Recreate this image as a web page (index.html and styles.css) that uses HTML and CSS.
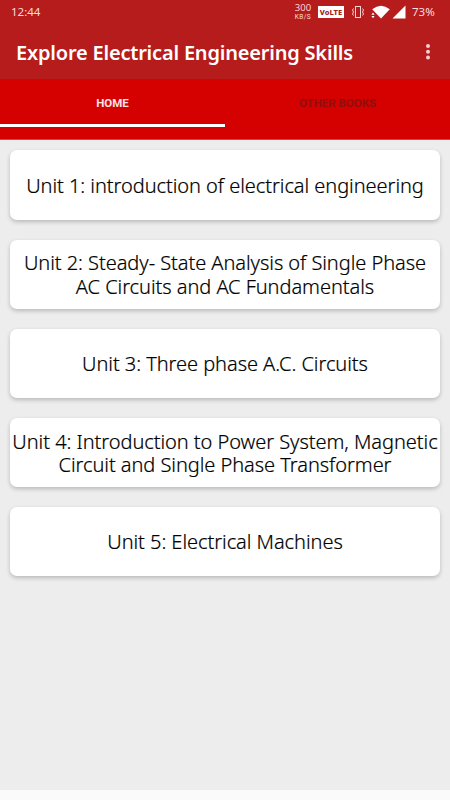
FILE: index.html
```html
<!DOCTYPE html>
<html>
<head>
    <title>Explore Electrical Engineering Skills</title>
    <meta charset="utf-8">
    <meta name="viewport" content="width=device-width,initial-scale=1.0">
    <link rel="stylesheet" href="styles.css">
</head>
<body>
<div class="status">
    <span class="time">12:44</span>
    <div class="speed"><span>300</span><span class="unit">KB/S</span></div>
    <div class="volte">VoLTE</div>
    <svg class="vibrate" width="14" height="14" viewBox="0 0 14 14" fill="none" stroke="#f6d5d5">
        <rect x="4.5" y="1.5" width="5" height="11"/>
        <path d="M2.5 3.5l-1 1.5 1 2-1 2 1 1.5M11.5 3.5l1 1.5-1 2 1 2-1 1.5"/>
    </svg>
    <svg class="wifi" width="19" height="14" viewBox="0 0 19 14" fill="#fff">
        <path d="M1.2 4.2Q10 -2.8 18.8 4.2L10 13.5z"/>
        <path d="M.4 9.8L2 7.6l1.6 2.2zM.4 11L2 13.2l1.6-2.2z"/>
    </svg>
    <svg class="signal" width="14" height="14" viewBox="0 0 14 14" fill="#fff">
        <path d="M13.5 .5v13H.5z"/>
    </svg>
    <span class="battery">73%</span>
</div>
<div class="toolbar">
    <div class="title">Explore Electrical Engineering Skills</div>
    <svg class="more" width="6" height="18" viewBox="0 0 6 18" fill="#f5cfcf">
        <circle cx="3" cy="3" r="2"/><circle cx="3" cy="8.7" r="2"/><circle cx="3" cy="14.4" r="2"/>
    </svg>
</div>
<div class="tabs">
    <div class="tab active"><span>HOME</span></div>
    <div class="tab"><span>OTHER BOOKS</span></div>
</div>
<div class="list">
    <div class="card">Unit 1: introduction of electrical engineering</div>
    <div class="card">Unit 2: Steady- State Analysis of Single Phase<br>AC Circuits and AC Fundamentals</div>
    <div class="card">Unit 3: Three phase A.C. Circuits</div>
    <div class="card">Unit 4: Introduction to Power System, Magnetic<br>Circuit and Single Phase Transformer</div>
    <div class="card">Unit 5: Electrical Machines</div>
</div>
<div class="navbar"></div>
</body>
</html>
```
FILE: styles.css
```css
*{box-sizing: border-box;}
body{margin: 0;height: 800px;display: flex;flex-direction: column;overflow: hidden;background: #ededed;font-family: "Noto Sans", sans-serif;}
.status{height: 24px;display: flex;align-items: center;padding: 0 14px 0 11px;background: #b71c1c;color: #f9dede;}
.time{font-size: 11.5px;line-height: 24px;margin-right: auto;}
.speed{width: 18px;display: flex;flex-direction: column;align-items: center;font-family: "Open Sans", sans-serif;font-size: 9.5px;line-height: 9px;}
.speed .unit{font-family: Roboto, sans-serif;font-size: 6.5px;line-height: 8px;padding-top: 1px;letter-spacing: .4px;}
.volte{width: 26px;height: 12px;margin-left: 6px;background: #fff;color: #a51c1c;font-size: 7.5px;font-weight: 800;line-height: 12px;text-align: center;}
.vibrate{margin-left: 7px;}
.wifi{margin-left: 6px;}
.signal{margin-left: 2px;}
.battery{width: 24px;margin-left: 6px;font-size: 11.5px;line-height: 24px;white-space: nowrap;}
.toolbar{height: 55px;display: flex;align-items: center;justify-content: space-between;padding: 0 19px 0 16px;background: #b71c1c;}
.title{padding-top: 1px;color: #fff;font-size: 20px;font-weight: 600;letter-spacing: -.2px;white-space: nowrap;}
.tabs{height: 61px;display: flex;background: #d50000;border-bottom: 1px solid #e04040;}
.tab{flex: 1;height: 48px;display: flex;align-items: center;justify-content: center;padding-top: 2px;border-bottom: 3px solid transparent;color: #8f0f0c;font-family: Roboto, sans-serif;font-size: 11.5px;font-weight: 700;}
.tab.active{color: #fbe4e4;border-bottom-color: #fff;}
.list{flex: 1;display: flex;flex-direction: column;gap: 20px;padding: 10.4px 10px;}
.card{height: 69.2px;display: flex;align-items: center;justify-content: center;padding-top: 1px;border-radius: 7px;background: #fff;box-shadow: 0 2px 4px rgba(0,0,0,.22);color: #000;font-size: 20px;font-weight: 300;line-height: 23.5px;letter-spacing: -.05px;text-align: center;white-space: nowrap;-webkit-text-stroke: .2px #000;}
.navbar{height: 10px;background: #fafafa;}
```
